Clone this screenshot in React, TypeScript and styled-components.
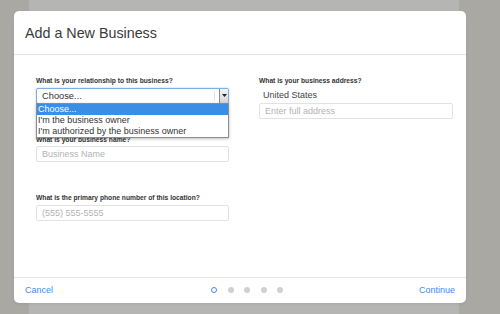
import React from "react";
import styled, { createGlobalStyle } from "styled-components";

const GlobalStyle = createGlobalStyle`
  html, body {
    margin: 0;
    padding: 0;
  }
  body {
    font-family: "Liberation Sans", Arial, Helvetica, sans-serif;
  }
`;

const steps = [true, false, false, false, false];

const options = [
  "Choose...",
  "I'm the business owner",
  "I'm authorized by the business owner",
];

const App: React.FC = () => {
  return (
    <Page>
      <GlobalStyle />
      <Backdrop />
      <Modal>
        <Header>
          <Title>Add a New Business</Title>
        </Header>
        <Body>
          <Column>
            <Field>
              <Label>What is your relationship to this business?</Label>
              <SelectWrap>
                <Select>
                  <span>Choose...</span>
                  <Divider />
                  <Arrow>
                    <svg width="5" height="3" viewBox="0 0 5 3">
                      <path d="M0 0 L5 0 L2.5 3 Z" fill="#222" />
                    </svg>
                  </Arrow>
                </Select>
                <Menu>
                  {options.map((o, i) => (
                    <MenuItem key={o} $active={i === 0}>
                      {o}
                    </MenuItem>
                  ))}
                </Menu>
              </SelectWrap>
            </Field>
            <Field>
              <Label>What is your business name?</Label>
              <Input>Business Name</Input>
            </Field>
            <Field>
              <Label>What is the primary phone number of this location?</Label>
              <Input>(555) 555-5555</Input>
            </Field>
          </Column>
          <Column>
            <Field>
              <Label>What is your business address?</Label>
              <Country>United States</Country>
              <Input>Enter full address</Input>
            </Field>
          </Column>
        </Body>
        <Footer>
          <FooterLink>Cancel</FooterLink>
          <Dots>
            {steps.map((on, i) => (
              <Dot key={i} $current={on} />
            ))}
          </Dots>
          <FooterLink>Continue</FooterLink>
        </Footer>
      </Modal>
    </Page>
  );
};

const Page = styled.div`
  position: relative;
  width: 500px;
  height: 314px;
  overflow: hidden;
  background: #a9a8a2;
  display: flex;
`;

const Backdrop = styled.div`
  margin-left: 29px;
  width: 430px;
  height: 100%;
  background: #b5b5b4;
`;

const Modal = styled.div`
  position: absolute;
  left: 14px;
  top: 11px;
  width: 452px;
  height: 292px;
  background: #ffffff;
  border-radius: 5px;
  display: flex;
  flex-direction: column;
  box-shadow: 0 1px 3px rgba(0, 0, 0, 0.08);
`;

const Header = styled.div`
  height: 44px;
  box-sizing: border-box;
  border-bottom: 1px solid #e4e4e4;
  padding: 12px 0 0 11px;
`;

const Title = styled.h1`
  margin: 0;
  font-size: 14.3px;
  font-weight: normal;
  line-height: 20px;
  color: #3a3a3a;
`;

const Body = styled.div`
  flex: 1;
  display: grid;
  grid-template-columns: 193px 194px;
  column-gap: 30px;
  padding: 21px 0 0 22px;
`;

const Column = styled.div`
  display: flex;
  flex-direction: column;
  gap: 31px;
`;

const Field = styled.div`
  display: flex;
  flex-direction: column;
`;

const Label = styled.div`
  font-size: 6.7px;
  font-weight: bold;
  line-height: 9px;
  color: #333333;
  margin-bottom: 2.5px;
`;

const SelectWrap = styled.div`
  position: relative;
`;

const Select = styled.div`
  height: 16px;
  box-sizing: border-box;
  border: 1px solid #7eaee6;
  border-radius: 2px;
  box-shadow: 0 0 2px rgba(82, 150, 230, 0.5);
  display: flex;
  align-items: center;
  padding-left: 5px;
  font-size: 9.3px;
  color: #333333;
  background: #ffffff;

  span {
    flex: 1;
  }
`;

const Divider = styled.div`
  width: 1px;
  height: 10px;
  background: #e2e2e2;
  margin-right: 4px;
`;

const Arrow = styled.div`
  width: 9px;
  height: 100%;
  box-sizing: border-box;
  border-left: 1px solid #8a8a8a;
  background: linear-gradient(#f2f2f2, #d6d6d6);
  display: flex;
  align-items: center;
  justify-content: center;
`;

const Menu = styled.div`
  position: absolute;
  top: 15px;
  left: 0;
  right: 0;
  z-index: 2;
  background: #ffffff;
  border: 1px solid #8c8c8c;
  box-shadow: 0 1px 3px rgba(0, 0, 0, 0.25);
`;

const MenuItem = styled.div<{ $active: boolean }>`
  height: 11px;
  line-height: 11px;
  padding-left: 1px;
  font-size: 9px;
  white-space: nowrap;
  color: ${(p) => (p.$active ? "#ffffff" : "#333333")};
  background: ${(p) => (p.$active ? "#3b8ee6" : "transparent")};
`;

const Input = styled.div`
  height: 16px;
  box-sizing: border-box;
  border: 1px solid #e2e2e2;
  border-radius: 2px;
  padding-left: 5px;
  font-size: 9px;
  line-height: 14px;
  color: #b3b3b3;
`;

const Country = styled.div`
  font-size: 9px;
  line-height: 12px;
  color: #444444;
  padding-left: 4px;
  margin: 1px 0 2px;
`;

const Footer = styled.div`
  height: 26px;
  box-sizing: border-box;
  border-top: 1px solid #e4e4e4;
  display: flex;
  align-items: center;
  justify-content: space-between;
  padding: 0 11px 1px 11px;
`;

const FooterLink = styled.a`
  font-size: 9px;
  color: #3d8cee;
  cursor: pointer;
`;

const Dots = styled.div`
  display: flex;
  gap: 10.5px;
  margin-left: 23px;
`;

const Dot = styled.span<{ $current: boolean }>`
  width: 6px;
  height: 6px;
  box-sizing: border-box;
  border-radius: 50%;
  background: ${(p) => (p.$current ? "transparent" : "#d0d0d0")};
  border: ${(p) => (p.$current ? "1px solid #3d8cee" : "none")};
`;

export default App;
